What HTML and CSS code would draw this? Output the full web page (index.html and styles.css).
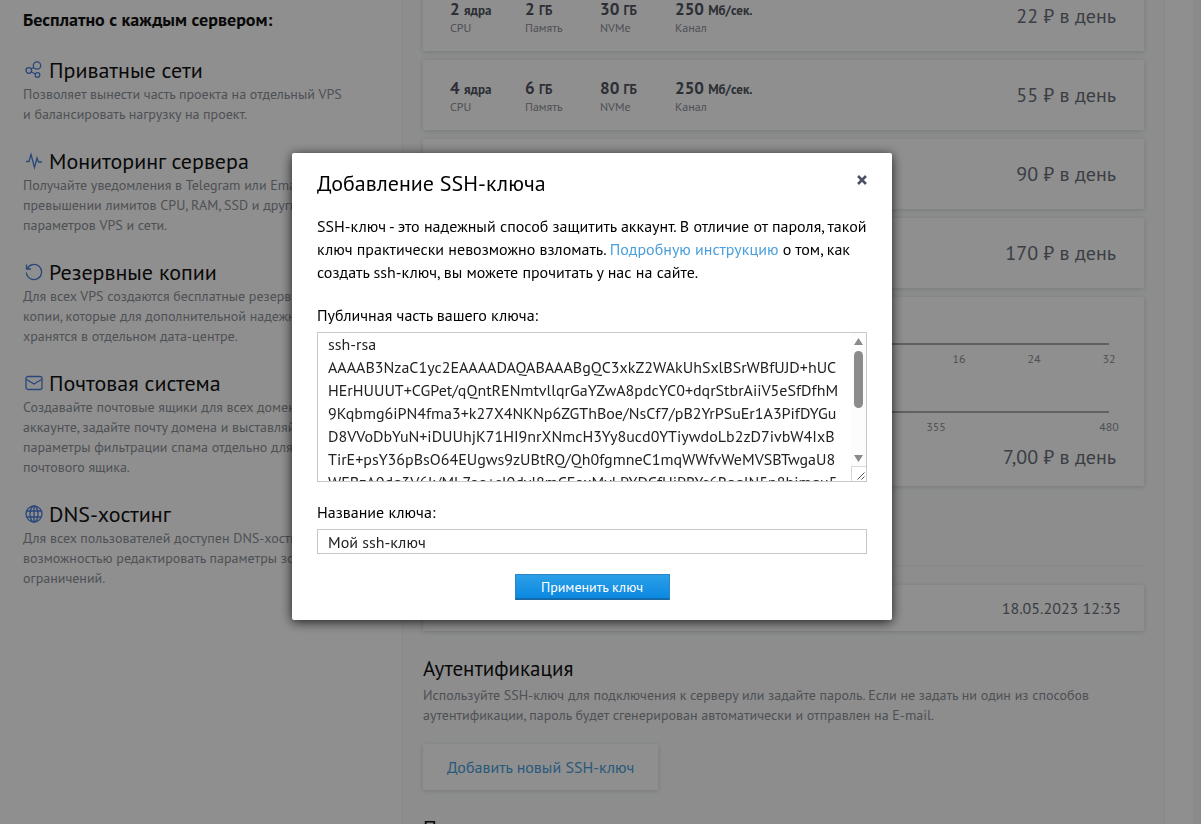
FILE: index.html
```html
<!DOCTYPE html>
<html lang="ru">
<head>
    <meta charset="UTF-8">
    <meta name="viewport" content="width=device-width, initial-scale=1.0">
    <title>Добавление SSH-ключа</title>
    <link rel="stylesheet" href="styles.css">
</head>
<body>

<div class="page">

    <!-- Sidebar -->
    <aside class="sidebar">
        <p class="sidebar-title">Бесплатно с каждым сервером:</p>

        <div class="feature">
            <h3>
                <svg class="icon" viewBox="0 0 18 18"><circle cx="12" cy="4.5" r="3.7"/><circle cx="3.8" cy="9.5" r="2.8"/><circle cx="12.5" cy="14" r="2.3"/><path d="M6.300 8l2.300-1.500M6.300 11l4.200 2"/></svg>
                Приватные сети
            </h3>
            <p>Позволяет вынести часть проекта на отдельный VPS<br>и балансировать нагрузку на проект.</p>
        </div>

        <div class="feature">
            <h3>
                <svg class="icon" viewBox="0 0 18 18"><path d="M1 9.500h3L6 2.500l3.500 13L12 6l1.500 4H17"/></svg>
                Мониторинг сервера
            </h3>
            <p>Получайте уведомления в Telegram или Email<br>превышении лимитов CPU, RAM, SSD и других<br>параметров VPS и сети.</p>
        </div>

        <div class="feature">
            <h3>
                <svg class="icon" viewBox="0 0 18 18"><path d="M1.500 1.500v4.500h4.500M2 6a7.600 7.600 0 1 1-.6 3.500"/></svg>
                Резервные копии
            </h3>
            <p>Для всех VPS создаются бесплатные резервные<br>копии, которые для дополнительной надежности<br>хранятся в отдельном дата-центре.</p>
        </div>

        <div class="feature">
            <h3>
                <svg class="icon" viewBox="0 0 18 18"><rect x="1" y="2.500" width="16" height="13" rx="2"/><path d="M1.500 5.500L9 10l7.500-4.500"/></svg>
                Почтовая система
            </h3>
            <p>Создавайте почтовые ящики для всех доменов<br>аккаунте, задайте почту домена и выставляйте<br>параметры фильтрации спама отдельно для<br>почтового ящика.</p>
        </div>

        <div class="feature">
            <h3>
                <svg class="icon" viewBox="0 0 18 18"><circle cx="9" cy="9" r="8"/><ellipse cx="9" cy="9" rx="4" ry="8"/><path d="M9 1v16M2 6h14M2 12h14"/></svg>
                DNS-хостинг
            </h3>
            <p>Для всех пользователей доступен DNS-хостинг<br>возможностью редактировать параметры зоны<br>ограничений.</p>
        </div>
    </aside>

    <!-- Order form -->
    <main class="content">
        <div class="card plan">
            <dl class="specs">
                <div><dt>2 <small>ядра</small></dt><dd>CPU</dd></div>
                <div><dt>2 <small>ГБ</small></dt><dd>Память</dd></div>
                <div><dt>30 <small>ГБ</small></dt><dd>NVMe</dd></div>
                <div><dt>250 <small>Мб/сек.</small></dt><dd>Канал</dd></div>
            </dl>
            <span class="price">22 ₽ в день</span>
        </div>

        <div class="card plan">
            <dl class="specs">
                <div><dt>4 <small>ядра</small></dt><dd>CPU</dd></div>
                <div><dt>6 <small>ГБ</small></dt><dd>Память</dd></div>
                <div><dt>80 <small>ГБ</small></dt><dd>NVMe</dd></div>
                <div><dt>250 <small>Мб/сек.</small></dt><dd>Канал</dd></div>
            </dl>
            <span class="price">55 ₽ в день</span>
        </div>

        <div class="card plan">
            <span class="price">90 ₽ в день</span>
        </div>

        <div class="card plan">
            <span class="price">170 ₽ в день</span>
        </div>

        <!-- Custom plan -->
        <div class="card custom-plan">
            <input class="slider" type="range" min="0" max="32" value="1" aria-label="Память">
            <div class="ticks"><span>16</span><span>24</span><span>32</span></div>
            <input class="slider" type="range" min="0" max="480" value="5" aria-label="NVMe">
            <div class="ticks ticks-wide"><span>355</span><span>480</span></div>
            <span class="price">7,00 ₽ в день</span>
        </div>

        <hr class="divider">

        <div class="card date">18.05.2023 12:35</div>

        <h2>Аутентификация</h2>
        <p class="hint">Используйте SSH-ключ для подключения к серверу или задайте пароль. Если не задать ни один из способов<br>аутентификации, пароль будет сгенерирован автоматически и отправлен на E-mail.</p>
        <button class="card add-key" type="button">Добавить новый SSH-ключ</button>

        <h2>Пароль</h2>
    </main>
</div>

<!-- Modal -->
<div class="overlay">
    <form class="modal" role="dialog" aria-labelledby="modal-title">
        <div class="modal-header">
            <h1 id="modal-title">Добавление SSH-ключа</h1>
            <button class="close" type="button" aria-label="Закрыть">
                <svg viewBox="0 0 10 10"><path d="M1 1l8 8M9 1l-8 8"/></svg>
            </button>
        </div>

        <p class="modal-text">SSH-ключ - это надежный способ защитить аккаунт. В отличие от пароля, такой<br>ключ практически невозможно взломать. <a href="#">Подробную инструкцию</a> о том, как<br>создать ssh-ключ, вы можете прочитать у нас на сайте.</p>

        <label for="key">Публичная часть вашего ключа:</label>
        <div class="key-box">
            <textarea id="key" spellcheck="false">ssh-rsa
AAAAB3NzaC1yc2EAAAADAQABAAABgQC3xkZ2WAkUhSxlBSrWBfUJD+hUC
HErHUUUT+CGPet/qQntRENmtvllqrGaYZwA8pdcYC0+dqrStbrAiiV5eSfDfhM
9Kqbmg6iPN4fma3+k27X4NKNp6ZGThBoe/NsCf7/pB2YrPSuEr1A3PifDYGu
D8VVoDbYuN+iDUUhjK71HI9nrXNmcH3Yy8ucd0YTiywdoLb2zD7ivbW4IxB
TirE+psY36pBsO64EUgws9zUBtRQ/Qh0fgmneC1mqWWfvWeMVSBTwgaU8
WEBzA0dq3V6k/ML7oo+sI0dyI8mCFoxMyLPYDCfHiPRYs6RqqIN5n8himqu5</textarea>
            <svg class="scrollbar" viewBox="0 0 15 148" aria-hidden="true">
                <rect width="15" height="133" fill="#fcfcfc"/>
                <path d="M3 12l4.500-7 4.500 7zM3 122l4.500 7 4.500-7z" fill="#8b8b8b"/>
                <rect x="3" y="18" width="9" height="57" rx="4.5" fill="#8b8b8b"/>
                <rect x=".5" y="133.5" width="15" height="15" fill="#fff" stroke="#d5d9db"/>
                <path d="M6.500 146.500l7-7M10.500 146.500l3-3" stroke="#555"/>
            </svg>
        </div>

        <label for="key-name">Название ключа:</label>
        <input id="key-name" class="text-input" type="text" value="Мой ssh-ключ">

        <button class="submit" type="submit">Применить ключ</button>
    </form>
</div>

</body>
</html>
```

FILE: styles.css
```css
* {
    margin: 0;
    padding: 0;
    box-sizing: border-box;
    font-family: "PT Sans", "Noto Sans", sans-serif;
}

body {
    height: 100vh;
    overflow: hidden;
    background: #f4f6f8;
    color: #111;
}

.page {
    display: flex;
    height: 100vh;
    margin-right: 8px;
    padding-right: 28px;
    overflow: hidden;
    background: #fff;
}

/* Sidebar */
.sidebar {
    flex: 0 0 402px;
    padding: 8px 0 0 23px;
    white-space: nowrap;
}

.sidebar-title {
    margin-bottom: 26px;
    font-size: 18px;
    font-weight: bold;
    line-height: 24px;
}

.feature {
    margin-bottom: 25px;
}

.feature h3 {
    display: flex;
    align-items: center;
    gap: 6px;
    margin-bottom: 2px;
    padding-left: 2px;
    font-size: 22px;
    font-weight: normal;
    line-height: 24px;
}

.feature p,
.hint {
    color: #8b9097;
    font-size: 14px;
    line-height: 20px;
}

.icon {
    width: 18px;
    height: 18px;
    fill: none;
    stroke: #4a7fd8;
    stroke-width: 1.3;
}

/* Content */
.content {
    flex: 1;
    margin-top: -19px;
    padding: 0 20px;
    background: #fbfcfc;
    border-left: 1px solid #eef1f3;
    border-right: 1px solid #eef1f3;
}

.card {
    margin-bottom: 9px;
    background: #fff;
    box-shadow: 0 1px 5px rgba(90, 110, 125, 0.25);
}

.plan {
    display: flex;
    align-items: center;
    height: 70px;
    padding: 0 28px 0 27px;
}

.specs {
    display: flex;
    padding-top: 3px;
}

.specs div {
    width: 75px;
    white-space: nowrap;
}

.specs dt {
    color: #50555f;
    font-size: 17px;
    font-weight: bold;
    line-height: 18px;
}

.specs small {
    font-size: 13px;
}

.specs dd {
    color: #8b9097;
    font-size: 12px;
    line-height: 16px;
}

.price {
    margin-left: auto;
    color: #6a6f79;
    font-size: 20px;
    line-height: 24px;
}

/* Custom plan */
.custom-plan {
    display: flex;
    flex-direction: column;
    height: 189px;
    margin-bottom: 79px;
    padding: 37px 28px 0 27px;
}

.slider {
    width: 100%;
    height: 20px;
    padding-right: 7px;
    appearance: none;
    background: transparent;
}

.slider::-webkit-slider-runnable-track {
    height: 2px;
    background: #a9adb1;
}

.slider::-webkit-slider-thumb {
    width: 12px;
    height: 12px;
    margin-top: -5px;
    appearance: none;
    border-radius: 50%;
    background: #4a9fdc;
}

.ticks {
    display: flex;
    justify-content: flex-end;
    gap: 45px;
    margin: -4px -8px 34px 0;
    color: #8b9097;
    font-size: 12px;
    line-height: 18px;
}

.ticks span {
    width: 30px;
    text-align: center;
}

.ticks-wide {
    gap: 143px;
    margin-bottom: 9px;
}

.divider {
    height: 1px;
    margin-bottom: 19px;
    border: none;
    background: #eef1f3;
}

.date {
    margin-bottom: 24px;
    padding: 0 23px;
    color: #6a6f79;
    font-size: 16px;
    line-height: 46px;
    text-align: right;
}

.content h2 {
    font-size: 21px;
    font-weight: normal;
    line-height: 28px;
}

.hint {
    margin-bottom: 19px;
    padding-top: 2px;
    white-space: nowrap;
}

.add-key {
    display: block;
    height: 46px;
    margin-bottom: 25px;
    padding: 0 24px;
    border: none;
    color: #4a9fdc;
    font-size: 16px;
    cursor: pointer;
}

/* Modal */
.overlay {
    position: fixed;
    inset: 0;
    display: flex;
    justify-content: center;
    align-items: flex-start;
    padding: 153px 17px 0 0;
    background: rgba(0, 0, 0, 0.44);
}

.modal {
    display: flex;
    flex-direction: column;
    width: 600px;
    padding: 16px 25px 20px;
    background: #fff;
    border-radius: 2px;
    box-shadow: 0 2px 12px rgba(0, 0, 0, 0.8);
    color: #000;
    font-size: 16px;
    line-height: 23px;
}

.modal-header {
    display: flex;
    justify-content: space-between;
    align-items: flex-start;
    margin-bottom: 18px;
}

.modal h1 {
    font-size: 22px;
    font-weight: normal;
    line-height: 28px;
}

.close {
    width: 10px;
    height: 20px;
    padding-top: 2px;
    border: none;
    background: none;
    cursor: pointer;
}

.close svg {
    display: block;
    width: 10px;
    height: 10px;
    stroke: #4b5063;
    stroke-width: 2.5;
}

.modal-text {
    margin-bottom: 20px;
    white-space: nowrap;
}

.modal a {
    color: #4a9fdc;
    text-decoration: none;
}

.modal label {
    margin-bottom: 5px;
}

.key-box {
    position: relative;
    margin-bottom: 19px;
}

.modal textarea,
.text-input {
    display: block;
    width: 100%;
    border: 1px solid #c5c9cc;
    outline: none;
    background: #fff;
    color: #222;
    font-size: 16px;
}

.modal textarea {
    height: 150px;
    padding: 0 10px;
    line-height: 23px;
    white-space: pre;
    overflow: hidden;
    resize: none;
}

/* Scrollbar over the right edge of the textarea */
.scrollbar {
    position: absolute;
    top: 1px;
    right: 1px;
    width: 15px;
    height: 148px;
    pointer-events: none;
}

.text-input {
    height: 25px;
    padding: 0 10px;
}

.submit {
    align-self: center;
    width: 155px;
    height: 26px;
    margin-top: 20px;
    border: 1px solid #2e86c4;
    border-bottom: 2px solid #1769a8;
    background: linear-gradient(#2da0e8, #0a88e0);
    color: #fff;
    font-size: 14px;
    cursor: pointer;
}
```
